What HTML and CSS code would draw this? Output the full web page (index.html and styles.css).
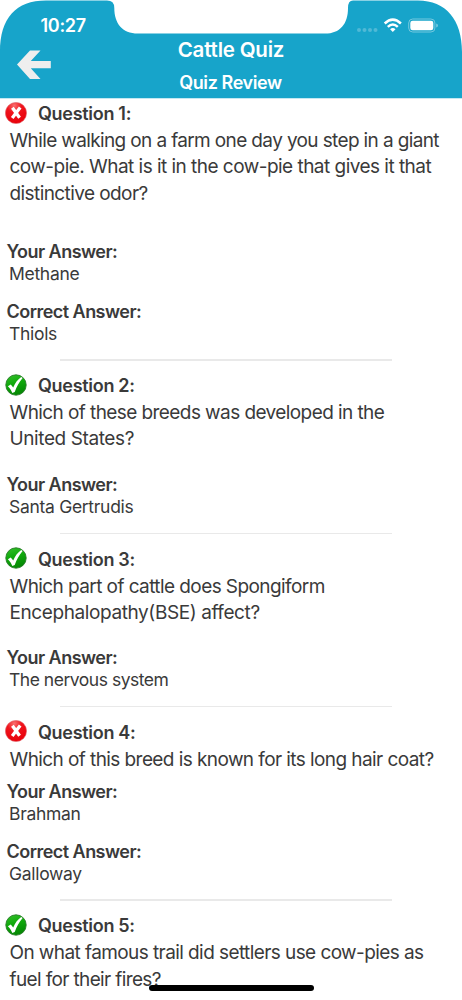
FILE: index.html
```html
<!DOCTYPE html>
<html lang="en">
<head>
<meta charset="utf-8">
<title>Cattle Quiz</title>
<link rel="stylesheet" href="styles.css">
</head>
<body>
<svg class="defs" width="0" height="0" aria-hidden="true">
  <defs>
    <radialGradient id="red" cx=".42" cy=".15" r=".85"><stop offset="0" stop-color="#f87070"/><stop offset=".4" stop-color="#f0141c"/><stop offset="1" stop-color="#e8000a"/></radialGradient>
    <linearGradient id="green" x1="0" y1="0" x2=".3" y2="1"><stop offset="0" stop-color="#35c22b"/><stop offset=".5" stop-color="#10a90c"/><stop offset="1" stop-color="#068a05"/></linearGradient>
    <symbol id="wrong" viewBox="0 0 22 22"><circle cx="11" cy="11" r="10.6" fill="url(#red)" stroke="#e06a70" stroke-width=".6"/><path d="M7.400 5.800 14.600 15.800M15.200 5.600 7.200 16" fill="none" stroke="#fff" stroke-width="3.300"/></symbol>
    <symbol id="right" viewBox="0 0 22 22"><circle cx="11" cy="11" r="10.2" fill="url(#green)" stroke="#287a28" stroke-width=".9"/><path d="M2.900 12.200 5.800 10.600 8.200 13.600C10 9 12.600 5.800 16.200 3L17.600 4.100C14 8.300 11.800 12.500 9.700 18L7.300 19C6.200 16.200 4.800 14 2.900 12.200Z" fill="#fff"/></symbol>
  </defs>
</svg>
<div class="screen">
  <header class="top">
    <svg class="top-shape" viewBox="0 0 462 99" width="462" height="99" aria-hidden="true">
      <path d="M0 98.3V52C0 18 16 .6 46 .6H107Q114.300 .6 114.300 8C114.300 23 122 33.600 138 33.600H325C340 33.600 348 24 348 8Q348 .6 353 .6H418C446 .6 462 20 462 52V98.300Z" fill="#17a4ca"/>
    </svg>
    <span class="time">10:27</span>
    <svg class="status" viewBox="0 0 86 20" width="86" height="20" aria-hidden="true">
      <g fill="#50b9d6"><circle cx="5" cy="14" r="2"/><circle cx="10.500" cy="14" r="2"/><circle cx="16" cy="14" r="2"/><circle cx="21.500" cy="14" r="2"/></g>
      <g fill="none" stroke="#fff" stroke-width="2.500"><path d="M30.700 7.500Q38.800 -.3 46.900 7.500"/><path d="M33.800 10.800Q38.800 6.200 43.800 10.800"/></g>
      <path d="M36.100 13.200Q38.800 10.900 41.500 13.200L38.800 16Z" fill="#fff"/>
      <rect x="54.700" y="3" width="26.200" height="13" rx="4" fill="none" stroke="#74c8df"/>
      <rect x="56.300" y="4.700" width="23" height="9.600" rx="2.300" fill="#fff"/>
      <path d="M82.200 7.500Q84 8 84 9.500T82.200 11.500Z" fill="#74c8df"/>
    </svg>
    <svg class="back" viewBox="0 0 36 32" width="36" height="32" aria-label="Back"><path d="M1 15.500 14 1.500H24.500L14.800 12H34.800V19.300H14.800L24.500 30H14Z" fill="#eee"/></svg>
    <h1 class="title">Cattle Quiz</h1>
    <h2 class="subtitle">Quiz Review</h2>
  </header>
  <main class="list">
    <section class="item">
      <h3 class="heading"><svg class="mark"><use href="#wrong"/></svg><span>Question 1:</span></h3>
      <p class="question tall"><span class="tight">While walking on a farm one day you step in a giant</span><br><span class="wide">cow-pie. What is it in the cow-pie that gives it that</span><br>distinctive odor?</p>
      <h4 class="label">Your Answer:</h4><p class="answer">Methane</p>
      <h4 class="label next">Correct Answer:</h4><p class="answer">Thiols</p>
    </section>
    <section class="item">
      <h3 class="heading"><svg class="mark"><use href="#right"/></svg><span>Question 2:</span></h3>
      <p class="question medium">Which of these breeds was developed in the<br><span class="loose">United States?</span></p>
      <h4 class="label">Your Answer:</h4><p class="answer">Santa Gertrudis</p>
    </section>
    <section class="item">
      <h3 class="heading"><svg class="mark"><use href="#right"/></svg><span>Question 3:</span></h3>
      <p class="question medium">Which part of cattle does Spongiform<br><span class="loose">Encephalopathy(BSE) affect?</span></p>
      <h4 class="label">Your Answer:</h4><p class="answer compact">The nervous system</p>
    </section>
    <section class="item">
      <h3 class="heading"><svg class="mark"><use href="#wrong"/></svg><span>Question 4:</span></h3>
      <p class="question">Which of this breed is known for its long hair coat?</p>
      <h4 class="label">Your Answer:</h4><p class="answer">Brahman</p>
      <h4 class="label next">Correct Answer:</h4><p class="answer">Galloway</p>
    </section>
    <section class="item">
      <h3 class="heading"><svg class="mark"><use href="#right"/></svg><span>Question 5:</span></h3>
      <p class="question medium">On what famous trail did settlers use cow-pies as<br><span class="tight">fuel for their fires?</span></p>
    </section>
  </main>
  <div class="home-bar"></div>
</div>
</body>
</html>
```
FILE: styles.css
```css
* { box-sizing: border-box; margin: 0; }
body { background: #fff; font-family: Inter, "Liberation Sans", sans-serif; color: #3a3a3a; }
.defs { position: absolute; }
.screen { position: relative; width: 462px; height: 1000px; overflow: hidden; }
.top { position: relative; height: 99px; padding-top: 36px; text-align: center; color: #fff; }
.top-shape { position: absolute; left: 0; top: 0; }
.title, .subtitle { position: relative; font-weight: 600; }
.title { font-size: 20.5px; line-height: 27px; letter-spacing: -.2px; }
.subtitle { margin-top: 7px; padding-right: 1px; font-size: 18px; line-height: 25px; letter-spacing: -.4px; }
.time { position: absolute; left: 40.500px; top: 15px; font-size: 18px; line-height: 22px; font-weight: 600; letter-spacing: -.3px; }
.status { position: absolute; left: 354px; top: 16px; }
.back { position: absolute; left: 16px; top: 49px; }
.list { padding-top: 1.1px; }
.item + .item { padding-top: 11.5px; }
.item:not(:last-child)::after { content: ""; display: block; width: 332px; height: 1.5px; margin: 14.500px 0 0 60px; background: #e9e9e9; }
.heading { display: flex; align-items: center; height: 28px; padding: 0 0 1px 5px; gap: 11px; font-size: 18px; font-weight: 600; letter-spacing: -.3px; }
.mark { width: 22px; height: 22px; margin-bottom: 2px; }
.question { min-height: 34.2px; padding-left: 9.500px; font-size: 19px; line-height: 26.2px; letter-spacing: -.58px; white-space: nowrap; }
.tight { letter-spacing: -.63px; }
.loose { letter-spacing: -.4px; }
.wide { letter-spacing: -.53px; }
.medium { min-height: 73.750px; }
.tall { min-height: 112.700px; }
.label { padding-left: 6.500px; font-size: 18px; font-weight: 600; line-height: 22px; letter-spacing: -.53px; }
.next { margin-top: 16px; }
.answer { padding-left: 9px; font-size: 17.5px; line-height: 22px; letter-spacing: -.3px; }
.compact { letter-spacing: -.48px; }
.home-bar { position: absolute; left: 149px; top: 985px; width: 165px; height: 6px; border-radius: 3px; background: #000; }
```
